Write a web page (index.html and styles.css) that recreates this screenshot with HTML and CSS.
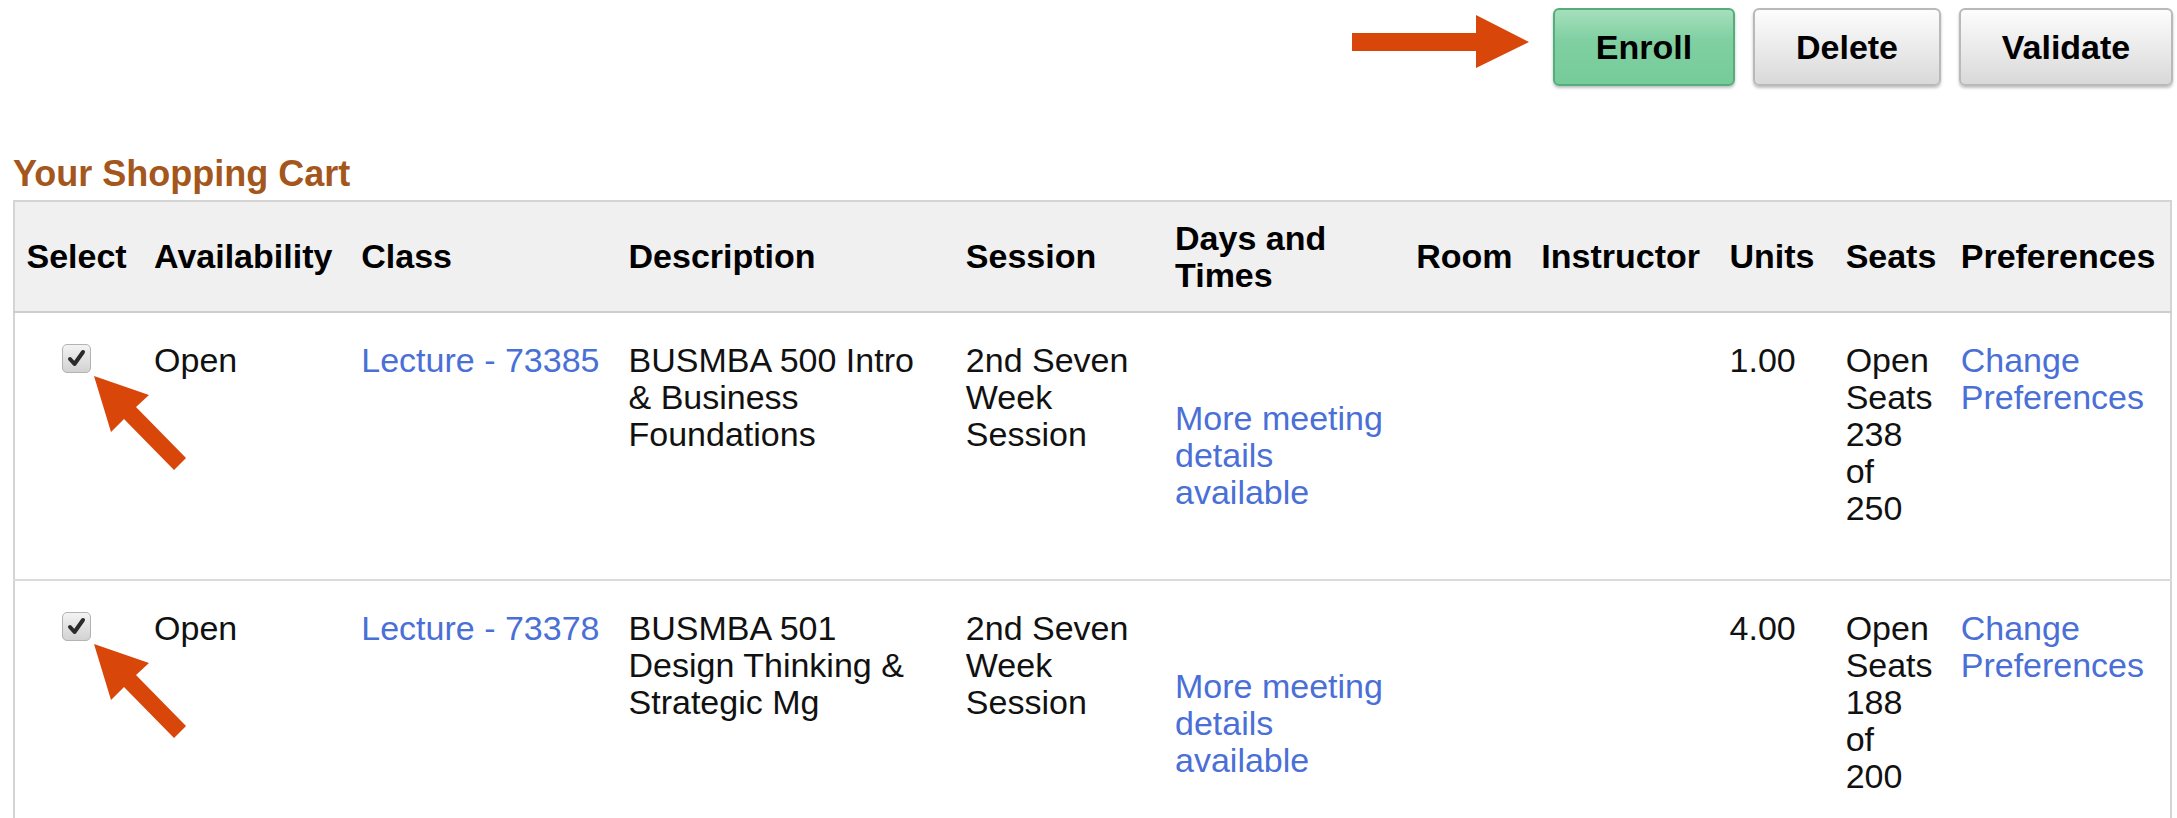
FILE: index.html
```html
<!DOCTYPE html>
<html lang="en">
  <head>
    <meta charset="UTF-8" />
    <title>Shopping Cart</title>
    <link rel="stylesheet" href="styles.css">
  </head>
  <body>
    <div class="toolbar">
      <svg class="arrow-right" width="177" height="53" viewBox="0 0 177 53">
        <polygon points="0,18 124,18 124,0 177,27 124,53 124,36 0,36" fill="#d8460a" />
      </svg>
      <button class="btn btn-green btn-enroll">Enroll</button>
      <button class="btn btn-delete">Delete</button>
      <button class="btn btn-validate">Validate</button>
    </div>

    <h2 class="cart-title">Your Shopping Cart</h2>

    <table class="cart">
      <colgroup>
        <col style="width: 124px" />
        <col style="width: 207px" />
        <col style="width: 267px" />
        <col style="width: 337px" />
        <col style="width: 209px" />
        <col style="width: 241px" />
        <col style="width: 125px" />
        <col style="width: 188px" />
        <col style="width: 116px" />
        <col style="width: 115px" />
        <col style="width: 226px" />
      </colgroup>
      <thead>
        <tr>
          <th class="sel">Select</th>
          <th>Availability</th>
          <th>Class</th>
          <th>Description</th>
          <th>Session</th>
          <th>Days and Times</th>
          <th>Room</th>
          <th>Instructor</th>
          <th>Units</th>
          <th>Seats</th>
          <th>Preferences</th>
        </tr>
      </thead>
      <tbody>
        <tr>
          <td class="sel">
            <span class="check-wrap">
              <span class="checkbox">
                <svg width="27" height="27" viewBox="0 0 27 27"><path d="M7 14 L11.5 19 L20 7" fill="none" stroke="#2b2b2b" stroke-width="4" stroke-linecap="round" stroke-linejoin="round" /></svg>
              </span>
              <svg class="arrow-pointer" width="130" height="130" viewBox="0 0 130 130">
                <polygon points="32,32 87,51 74,63 124,114 112,126 62,75 49,88" fill="#d8460a" />
              </svg>
            </span>
          </td>
          <td>Open</td>
          <td class="nowrap"><a href="#">Lecture - 73385</a></td>
          <td><div class="desc">BUSMBA 500 Intro &amp; Business Foundations</div></td>
          <td>2nd Seven Week Session</td>
          <td><a class="meeting" href="#">More meeting details available</a></td>
          <td></td>
          <td></td>
          <td>1.00</td>
          <td><div class="seats">Open Seats 238 of 250</div></td>
          <td><a href="#">Change Preferences</a></td>
        </tr>
        <tr>
          <td class="sel">
            <span class="check-wrap">
              <span class="checkbox">
                <svg width="27" height="27" viewBox="0 0 27 27"><path d="M7 14 L11.5 19 L20 7" fill="none" stroke="#2b2b2b" stroke-width="4" stroke-linecap="round" stroke-linejoin="round" /></svg>
              </span>
              <svg class="arrow-pointer" width="130" height="130" viewBox="0 0 130 130">
                <polygon points="32,32 87,51 74,63 124,114 112,126 62,75 49,88" fill="#d8460a" />
              </svg>
            </span>
          </td>
          <td>Open</td>
          <td class="nowrap"><a href="#">Lecture - 73378</a></td>
          <td><div class="desc">BUSMBA 501 Design Thinking &amp; Strategic Mg</div></td>
          <td>2nd Seven Week Session</td>
          <td><a class="meeting" href="#">More meeting details available</a></td>
          <td></td>
          <td></td>
          <td>4.00</td>
          <td><div class="seats">Open Seats 188 of 200</div></td>
          <td><a href="#">Change Preferences</a></td>
        </tr>
      </tbody>
    </table>
  </body>
</html>
```

FILE: styles.css
```css
* {
  margin: 0;
  padding: 0;
  box-sizing: border-box;
}
body {
  font-family: "Liberation Sans", Arial, sans-serif;
  color: #111;
  background: #fff;
  overflow: hidden;
}
.toolbar {
  display: flex;
  justify-content: flex-end;
  align-items: flex-start;
  gap: 18px;
  padding: 8px 4px 0 0;
}
.arrow-right {
  margin-top: 7px;
  margin-right: 6px;
}
.btn {
  height: 78px;
  padding: 0;
  text-align: center;
  font-family: "Liberation Sans", Arial, sans-serif;
  font-size: 34px;
  font-weight: bold;
  color: #000;
  border: 2px solid #b9b9b9;
  border-radius: 6px;
  background: linear-gradient(#fdfdfd, #e9e9e9 55%, #d9d9d9);
  box-shadow: 0 2px 3px rgba(0, 0, 0, 0.25);
  cursor: pointer;
}
.btn-enroll {
  width: 182px;
}
.btn-delete {
  width: 188px;
}
.btn-validate {
  width: 214px;
}
.btn-green {
  border-color: #56ad7c;
  background: linear-gradient(#a6dfbd, #80d0a2 40%, #76cb9a);
}
.cart-title {
  margin: 68px 0 6px 13px;
  font-size: 36px;
  line-height: 40px;
  color: #a4571c;
}
.cart {
  margin-left: 13px;
  width: 2159px;
  table-layout: fixed;
  border-collapse: collapse;
  border: 2px solid #d4d4d4;
  border-bottom: none;
  font-size: 34px;
  line-height: 37px;
}
.cart th {
  height: 111px;
  padding-left: 16px;
  text-align: left;
  vertical-align: middle;
  background: #f0f0f0;
  border-bottom: 2px solid #cdcdcd;
  font-weight: bold;
  color: #000;
}
.cart td {
  padding: 29px 0 52px 16px;
  vertical-align: top;
  border-bottom: 2px solid #dadada;
}
.cart .sel {
  padding-left: 0;
  text-align: center;
}
.nowrap {
  white-space: nowrap;
}
.cart a {
  color: #4a6fd6;
  text-decoration: none;
}
.desc {
  width: 300px;
}
.seats {
  width: 90px;
}
.meeting {
  display: block;
  margin-top: 58px;
  width: 215px;
}
.check-wrap {
  position: relative;
  display: inline-block;
  width: 29px;
  height: 29px;
  margin-top: 2px;
  vertical-align: top;
}
.checkbox {
  display: block;
  width: 29px;
  height: 29px;
  border: 1px solid #b3b3b3;
  border-radius: 5px;
  background: linear-gradient(#f3f3f3, #d2d2d2);
}
.checkbox svg {
  display: block;
}
.arrow-pointer {
  position: absolute;
  left: 0;
  top: 0;
}
```
